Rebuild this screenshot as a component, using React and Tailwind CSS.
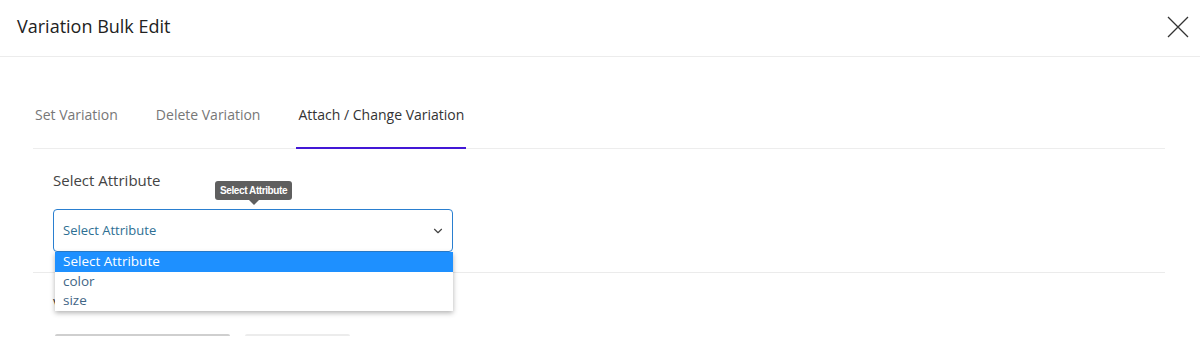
import React from "react";
import { ChevronDown } from "lucide-react";

const tabs = ["Set Variation", "Delete Variation", "Attach / Change Variation"];
const options = ["Select Attribute", "color", "size"];

export default function App() {
    const active = 2;

    return (
        <div className="w-[1200px] h-[359px] overflow-hidden bg-white font-['Open_Sans',sans-serif]">
            {/* Header */}
            <div className="flex items-center justify-between h-[57px] pl-[17px] pr-[10px] border-b border-[#ececec]">
                <h1 className="text-[18px] text-[#222] -mt-[4px]">Variation Bulk Edit</h1>
                <button className="w-[24px] h-[24px] -mt-[2px]">
                    <svg width="24" height="24" viewBox="0 0 24 24" stroke="#333" strokeWidth="1.3" fill="none">
                        <path d="M2 2 L22 22 M22 2 L2 22" />
                    </svg>
                </button>
            </div>

            <div className="pl-[33px] pr-[35px]">
                {/* Tabs */}
                <div className="flex border-b border-[#ededed] pt-[46px]">
                    {tabs.map((tab, i) => (
                        <div
                            key={tab}
                            className={`px-[2px] mr-[34px] pb-[20px] text-[14px] leading-[24px] border-b-2 -mb-px ${
                                i === active ? "border-[#4318d6] text-[#333]" : "border-transparent text-[#777]"
                            }`}
                        >
                            {tab}
                        </div>
                    ))}
                </div>

                {/* Attribute select */}
                <div className="relative pl-[20px] pt-[21px] pb-[20px] border-b border-[#ebebeb]">
                    <label className="block text-[15px] leading-[20px] text-[#444]">Select Attribute</label>

                    <div className="absolute left-[182px] top-[32px] bg-[#5f5f5f] rounded-[3px] px-[5px] h-[19px] flex items-center text-white text-[10px] font-bold tracking-[-0.4px] font-['Liberation_Sans',sans-serif]">
                        Select Attribute
                        <span className="absolute left-1/2 -translate-x-1/2 top-full w-0 h-0 border-x-[5px] border-x-transparent border-t-[5px] border-t-[#5f5f5f]" />
                    </div>

                    <div className="mt-[19px] w-[400px] h-[43px] border border-[#2a7fd0] rounded-[4px] flex items-center justify-between pl-[9px] pr-[7px] text-[13px] text-[#2e6f93]">
                        <span>Select Attribute</span>
                        <ChevronDown size={14} strokeWidth={2} className="text-[#444]" />
                    </div>

                    <div className="absolute left-[22px] top-[103px] w-[398px] bg-white shadow-[0_2px_5px_rgba(0,0,0,0.3)] text-[13.5px] leading-[19.5px] text-[#3f6585] z-10">
                        {options.map((opt, i) => (
                            <div key={opt} className={`pl-[8px] ${i === 0 ? "bg-[#1e90ff] text-white" : ""}`}>
                                {opt}
                            </div>
                        ))}
                    </div>
                </div>

                {/* Values (mostly hidden behind dropdown) */}
                <div className="pl-[20px] pt-[20px]">
                    <label className="block text-[15px] leading-[20px] text-[#444]">Values</label>
                    <div className="flex gap-[15px] mt-[21px] ml-[2px]">
                        <div className="w-[175px] h-[30px] border-t-2 border-[#cfcfcf] rounded-[2px]" />
                        <div className="w-[105px] h-[30px] border-t-2 border-[#ececec] rounded-[2px]" />
                    </div>
                </div>
            </div>
        </div>
    );
}
